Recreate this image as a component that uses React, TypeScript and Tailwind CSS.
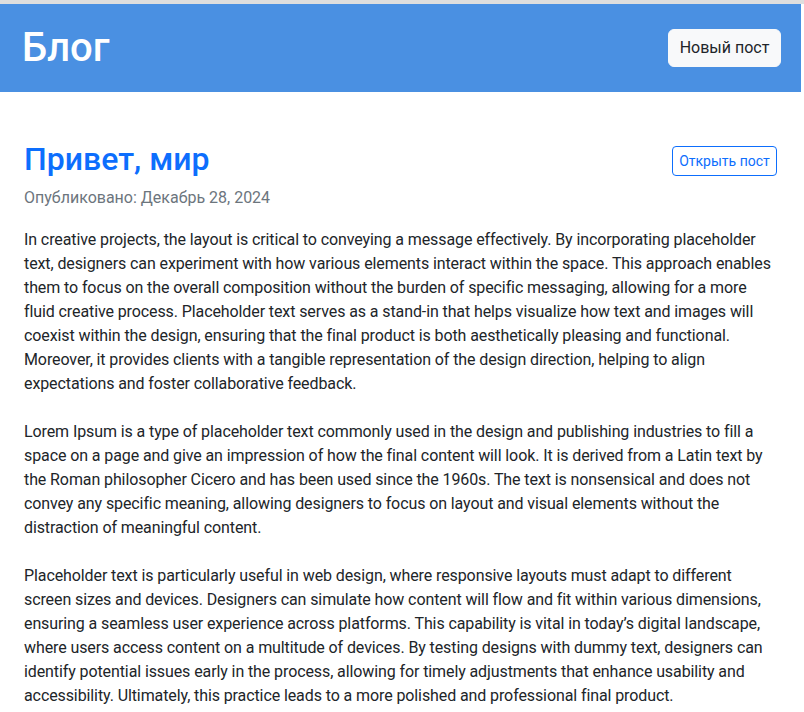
const paragraphs = [
  'In creative projects, the layout is critical to conveying a message effectively. By incorporating placeholder text, designers can experiment with how various elements interact within the space. This approach enables them to focus on the overall composition without the burden of specific messaging, allowing for a more fluid creative process. Placeholder text serves as a stand-in that helps visualize how text and images will coexist within the design, ensuring that the final product is both aesthetically pleasing and functional. Moreover, it provides clients with a tangible representation of the design direction, helping to align expectations and foster collaborative feedback.',
  'Lorem Ipsum is a type of placeholder text commonly used in the design and publishing industries to fill a space on a page and give an impression of how the final content will look. It is derived from a Latin text by the Roman philosopher Cicero and has been used since the 1960s. The text is nonsensical and does not convey any specific meaning, allowing designers to focus on layout and visual elements without the distraction of meaningful content.',
  'Placeholder text is particularly useful in web design, where responsive layouts must adapt to different screen sizes and devices. Designers can simulate how content will flow and fit within various dimensions, ensuring a seamless user experience across platforms. This capability is vital in today\u2019s digital landscape, where users access content on a multitude of devices. By testing designs with dummy text, designers can identify potential issues early in the process, allowing for timely adjustments that enhance usability and accessibility. Ultimately, this practice leads to a more polished and professional final product.',
];

export default function App() {
  return (
    <div className="min-h-screen bg-white text-[#212529] font-['Roboto',sans-serif]">
      <div className="h-[4px] bg-[#dedede]" />
      <div className="w-[801px]">
        <header className="h-[88px] bg-[#4a90e2] flex items-center justify-between pl-5 pr-5">
          <h1 className="text-[40px] font-medium leading-none text-white ml-[2px]">Блог</h1>
          <button className="h-[38px] w-[113px] rounded-md bg-[#f8f9fa] border border-[#f8f9fa] text-base text-[#212529]">
            Новый пост
          </button>
        </header>

        <main className="pl-6 pr-5 pt-12">
          <article>
            <div className="flex items-center justify-between pr-1">
              <h2 className="text-[32px] font-medium leading-[1.2] text-[#0d6efd]">Привет, мир</h2>
              <button className="h-[30px] w-[105px] rounded border border-[#0d6efd] text-sm text-[#0d6efd] mt-[4px]">
                Открыть пост
              </button>
            </div>
            <p className="mt-2 text-base leading-6 text-[#6c757d]">Опубликовано: Декабрь 28, 2024</p>

            <div className="mt-[18px] flex flex-col gap-6">
              {paragraphs.map((text, i) => (
                <p key={i} className="text-base leading-6 tracking-[-0.1px]">
                  {text}
                </p>
              ))}
            </div>
          </article>
        </main>
      </div>
    </div>
  );
}
